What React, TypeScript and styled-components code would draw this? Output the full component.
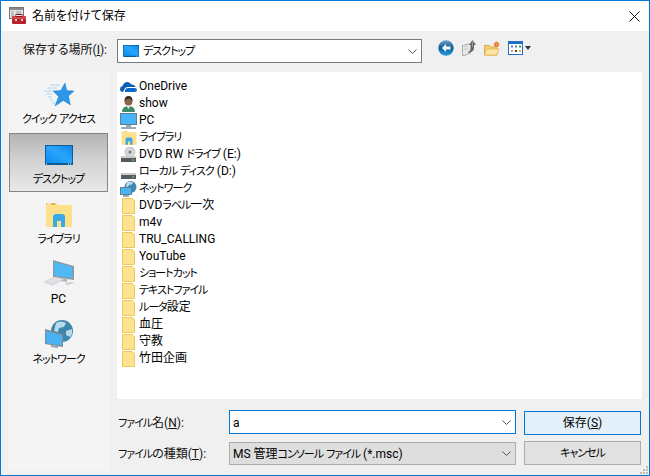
import { FC, ReactNode } from "react";
import styled, { createGlobalStyle } from "styled-components";

const GlobalStyle = createGlobalStyle`
  html, body {
    margin: 0;
    padding: 0;
    background: #f0f0f0;
  }
  * {
    box-sizing: border-box;
  }
`;

/* ---------- icons ---------- */

const AppIcon: FC = () => (
  <svg width="18" height="18" viewBox="0 0 18 18">
    <rect x="0.5" y="0.5" width="14" height="11" fill="#e4e4e4" stroke="#777" />
    <rect x="1" y="1" width="13" height="2" fill="#8a8a8a" />
    <path d="M2 5h3M2 7h3M2 9h3M7 5h5M7 7h5" stroke="#999" />
    <rect x="3" y="9" width="14" height="8" rx="1" fill="#b5232a" />
    <rect x="3" y="9" width="14" height="3" fill="#d6474a" />
    <rect x="7" y="7.5" width="6" height="2" fill="none" stroke="#8c1c20" />
    <rect x="6" y="12" width="2" height="2" fill="#f3c9c9" />
    <rect x="12" y="12" width="2" height="2" fill="#f3c9c9" />
  </svg>
);

const DesktopIcon: FC<{ w: number; h: number }> = ({ w, h }) => (
  <svg width={w} height={h} viewBox="0 0 28 20" preserveAspectRatio="none">
    <defs>
      <linearGradient id="desk" x1="0" y1="1" x2="1" y2="0">
        <stop offset="0" stopColor="#0a8cf0" />
        <stop offset="0.55" stopColor="#2aa5fb" />
        <stop offset="1" stopColor="#0f86e8" />
      </linearGradient>
    </defs>
    <rect width="28" height="20" fill="#0c5c96" />
    <rect x="1" y="1" width="26" height="17" fill="url(#desk)" />
    <path d="M1 19h1M23 19h1M25 19h1" stroke="#fff" />
  </svg>
);

const StarIcon: FC = () => (
  <svg width="30" height="24" viewBox="0 0 30 24">
    <path d="M6 2h10M3 5h10M0 8h8M2 11h6M4 14h4M6 17h3M8 20h3" stroke="#a9d6f5" strokeWidth="1" />
    <path
      d="M21 0l1.800 7.600 7.200.400-5.600 5 2 9-7-4.600-8.400 5.600 3.600-9.400-5.600-5.600 7.800-.400z"
      fill="#2b97e6"
      stroke="#1c7fca"
      strokeWidth="0.5"
    />
  </svg>
);

const LibraryIcon: FC<{ size: number }> = ({ size }) => (
  <svg width={size} height={size} viewBox="0 0 28 28">
    <path d="M1 2h9l2 2h-11z" fill="#e9b93c" />
    <rect x="1" y="4" width="26" height="22" fill="#fde08a" />
    <rect x="2" y="2.4" width="4" height="1.2" fill="#fff" />
    <path d="M8 26V16q0-3 3-3h6q3 0 3 3v10h-4v-6h-4v6z" fill="#39a8e4" />
  </svg>
);

const PcLargeIcon: FC = () => (
  <svg width="32" height="33" viewBox="0 0 32 33">
    <path d="M10 1l21 6v14l-21-3z" fill="#8b9aa6" />
    <path d="M11 3l18 5v11l-18-2.600z" fill="#4fb8f7" />
    <path d="M18 19l6 1v3l-6-1z" fill="#aeb8c0" />
    <path d="M1 23l11-5 9 2-11 6z" fill="#dfe3e6" stroke="#b5bbc0" strokeWidth="0.5" />
    <path d="M22 24l7-1 2 1-7 2z" fill="#c8cdd1" />
  </svg>
);

const NetworkLargeIcon: FC = () => (
  <svg width="30" height="30" viewBox="0 0 30 30">
    <circle cx="18" cy="11" r="11" fill="#3d86ad" />
    <path d="M12 3q5-3 10 0l-2 4-5 1-1 4-4-1zM22 11l6-2q1 5-2 8l-4-2z" fill="#b9dbe8" />
    <path d="M1 9l18 5v13l-18-3z" fill="#7d8c97" />
    <path d="M2 11l16 4.400v10.200l-16-2.600z" fill="#48b2f5" />
    <path d="M7 25l7 1.200v2l-7-1.200z" fill="#9aa7b0" />
  </svg>
);

const OneDriveIcon: FC = () => (
  <svg width="17" height="12" viewBox="0 0 17 12">
    <path
      d="M3 11q-3 0-3-3 0-2.500 2.500-3Q4 1 7.500 1 10 1 11.500 3.500 15 3.500 15.500 6H8Q5 6 4 9z"
      fill="#0a5fb4"
    />
    <path d="M5 11q-.5-4 3.500-4h6q2.500 0 2.500 2 0 2-2.500 2z" fill="#0a6cc8" />
  </svg>
);

const UserIcon: FC = () => (
  <svg width="15" height="16" viewBox="0 0 15 16">
    <path d="M1 16q0-6 6.500-6T14 16z" fill="#3f8a68" />
    <path d="M5.500 10l2 3 2-3z" fill="#d9e8de" />
    <circle cx="7.500" cy="5.500" r="4" fill="#8a6448" />
    <path d="M3.500 5q0-5 4-5t4 5q-2-2.500-4-2.500T3.500 5z" fill="#3a2a20" />
  </svg>
);

const PcSmallIcon: FC = () => (
  <svg width="17" height="16" viewBox="0 0 17 16">
    <rect x="0.500" y="0.500" width="16" height="11" fill="#48b4f8" stroke="#5f7f98" />
    <rect x="6" y="12" width="5" height="2" fill="#9ab" />
    <rect x="1" y="14" width="15" height="2" fill="#9da9b2" />
  </svg>
);

const DriveIcon: FC<{ disc?: boolean }> = ({ disc }) => (
  <svg width="17" height="16" viewBox="0 0 17 16">
    {disc && (
      <>
        <circle cx="10" cy="5" r="5" fill="#d5d8da" stroke="#9a9fa3" strokeWidth="0.5" />
        <circle cx="10" cy="5" r="1.500" fill="#777" />
      </>
    )}
    <path d="M2 9h13l1 2v4H1v-4z" fill="#555b60" />
    <path d="M2 9h13l1 2H1z" fill="#c9cdd0" />
    <rect x="12" y="12.500" width="2" height="1" fill="#6fe26f" />
  </svg>
);

const NetworkSmallIcon: FC = () => (
  <svg width="17" height="16" viewBox="0 0 17 16">
    <circle cx="10.500" cy="6" r="6" fill="#3f8ab3" />
    <path d="M7 1.500q3-1.500 6 0l-1 2-3 .5-1 2-2-.5z" fill="#bcdde9" />
    <rect x="0.500" y="6.500" width="11" height="7" fill="#48b4f8" stroke="#5f7f98" />
    <rect x="3" y="14" width="6" height="2" fill="#9da9b2" />
  </svg>
);

const FolderIcon: FC = () => (
  <svg width="13" height="16" viewBox="0 0 13 16">
    <path d="M0.500 0.500h9.500l2.500 2v13H0.500z" fill="#fde28f" stroke="#eec659" />
  </svg>
);

const Chevron: FC = () => (
  <svg width="9" height="5" viewBox="0 0 9 5">
    <path d="M.5 .5l4 4 4-4" fill="none" stroke="#555" />
  </svg>
);

const BackIcon: FC = () => (
  <svg width="16" height="16" viewBox="0 0 16 16">
    <defs>
      <linearGradient id="back" x1="0" y1="0" x2="0" y2="1">
        <stop offset="0" stopColor="#6f9ec2" />
        <stop offset="0.5" stopColor="#0d5f9f" />
        <stop offset="1" stopColor="#29a0dc" />
      </linearGradient>
    </defs>
    <circle cx="8" cy="8" r="7.700" fill="url(#back)" />
    <path d="M8 4L4 8l4 4V9.500h4.500v-3H8z" fill="#f4f8fb" />
  </svg>
);

const UpIcon: FC = () => (
  <svg width="14" height="16" viewBox="0 0 14 16">
    <path d="M.5 5.500l6-1.500h2v9l-6 2.500H.5z" fill="#e8e8e8" stroke="#ababab" />
    <path d="M2 7l4-1M2 9.500l4-1" stroke="#c8c8c8" />
    <path d="M6 12q3-1 3-5V5H7l3.500-5L14 5h-2v3q0 4-6 5z" fill="#666" />
    <path d="M10.500 1v6" stroke="#999" />
  </svg>
);

const NewFolderIcon: FC = () => (
  <svg width="16" height="15" viewBox="0 0 16 15">
    <path d="M.5 4.500h5l1 1.500H13v8H.5z" fill="#f3d27a" stroke="#d9ae4a" />
    <path d="M2.500 8H15l-2 6H.5z" fill="#fce6a4" stroke="#d9ae4a" strokeWidth="0.7" />
    <circle cx="12.500" cy="3.500" r="2.500" fill="#f4682a" />
    <path d="M12.500 0v7M9.500 3.500h6" stroke="#f8a23c" strokeWidth="0.8" />
  </svg>
);

const ViewIcon: FC = () => (
  <svg width="15" height="14" viewBox="0 0 15 14">
    <rect x="0.500" y="0.500" width="14" height="13" fill="#fff" stroke="#1b6fc9" />
    <rect x="1" y="1" width="13" height="2" fill="#1b6fc9" />
    <rect x="3" y="4.500" width="2" height="2" fill="#4f7fc4" />
    <rect x="7" y="4.500" width="2" height="2" fill="#4f7fc4" />
    <rect x="11" y="4.500" width="2" height="2" fill="#2e9a3c" />
    <rect x="3" y="9" width="2" height="2" fill="#ef8a62" />
    <rect x="7" y="9" width="2" height="2" fill="#444" />
    <rect x="11" y="9" width="2" height="2" fill="#e3b23c" />
  </svg>
);

const CloseIcon: FC = () => (
  <svg width="11" height="11" viewBox="0 0 11 11">
    <path d="M.5.500l10 10M10.500.500l-10 10" stroke="#111" strokeWidth="1" />
  </svg>
);

/* ---------- text ---------- */

const Jp: FC<{ children: string }> = ({ children }) => (
  <span>
    {children.split(/([\u30a0-\u30ff]+)/).map((part, i) =>
      i % 2 === 1 ? <Kana key={i}>{part}</Kana> : part
    )}
  </span>
);

/* ---------- data ---------- */

const sidebarItems: { label: string; icon: ReactNode; selected?: boolean }[] = [
  { label: "クイック アクセス", icon: <StarIcon /> },
  { label: "デスクトップ", icon: <DesktopIcon w={28} h={20} />, selected: true },
  { label: "ライブラリ", icon: <LibraryIcon size={28} /> },
  { label: "PC", icon: <PcLargeIcon /> },
  { label: "ネットワーク", icon: <NetworkLargeIcon /> },
];

const fileItems: { label: string; icon: ReactNode }[] = [
  { label: "OneDrive", icon: <OneDriveIcon /> },
  { label: "show", icon: <UserIcon /> },
  { label: "PC", icon: <PcSmallIcon /> },
  { label: "ライブラリ", icon: <LibraryIcon size={16} /> },
  { label: "DVD RW ドライブ (E:)", icon: <DriveIcon disc /> },
  { label: "ローカル ディスク (D:)", icon: <DriveIcon /> },
  { label: "ネットワーク", icon: <NetworkSmallIcon /> },
  { label: "DVDラベル一次", icon: <FolderIcon /> },
  { label: "m4v", icon: <FolderIcon /> },
  { label: "TRU_CALLING", icon: <FolderIcon /> },
  { label: "YouTube", icon: <FolderIcon /> },
  { label: "ショートカット", icon: <FolderIcon /> },
  { label: "テキストファイル", icon: <FolderIcon /> },
  { label: "ルータ設定", icon: <FolderIcon /> },
  { label: "血圧", icon: <FolderIcon /> },
  { label: "守教", icon: <FolderIcon /> },
  { label: "竹田企画", icon: <FolderIcon /> },
];

/* ---------- page ---------- */

const App: FC = () => (
  <>
    <GlobalStyle />
    <Window>
      <TitleBar>
        <AppIcon />
        <Title>名前を付けて保存</Title>
        <CloseButton>
          <CloseIcon />
        </CloseButton>
      </TitleBar>

      <LocationRow>
        <LocationLabel>
          保存する場所(<u>I</u>):
        </LocationLabel>
        <LocationCombo>
          <DesktopIcon w={16} h={12} />
          <ComboText>
            <Jp>デスクトップ</Jp>
          </ComboText>
          <Chevron />
        </LocationCombo>
        <ToolIcons>
          <BackIcon />
          <UpIcon />
          <NewFolderIcon />
          <ViewMenu>
            <ViewIcon />
            <ViewArrow />
          </ViewMenu>
        </ToolIcons>
      </LocationRow>

      <Body>
        <Sidebar>
          {sidebarItems.map(({ label, icon, selected }) => (
            <SidebarItem key={label} $selected={selected}>
              <SidebarIcon>{icon}</SidebarIcon>
              <Jp>{label}</Jp>
            </SidebarItem>
          ))}
        </Sidebar>

        <Main>
          <FileList>
            {fileItems.map(({ label, icon }) => (
              <FileRow key={label}>
                <FileIcon>{icon}</FileIcon>
                <Jp>{label}</Jp>
              </FileRow>
            ))}
          </FileList>

          <Form>
            <FormLabel>
              <Jp>ファイル名</Jp>(<u>N</u>):
            </FormLabel>
            <NameField>
              <FieldText>a</FieldText>
              <Chevron />
            </NameField>
            <SaveButton>
              保存(<u>S</u>)
            </SaveButton>
            <FormLabel>
              <Jp>ファイルの種類</Jp>(<u>T</u>):
            </FormLabel>
            <TypeField>
              <FieldText>
                <Jp>MS 管理コンソール ファイル (*.msc)</Jp>
              </FieldText>
              <Chevron />
            </TypeField>
            <CancelButton>
              <Jp>キャンセル</Jp>
            </CancelButton>
          </Form>
        </Main>
      </Body>

      <Grip viewBox="0 0 9 9" width="9" height="9">
        <path d="M6 0h2v2H6zM3 3h2v2H3zM6 3h2v2H6zM0 6h2v2H0zM3 6h2v2H3zM6 6h2v2H6z" fill="#bdbdbd" />
      </Grip>
    </Window>
  </>
);

const Window = styled.div`
  position: relative;
  display: flex;
  flex-direction: column;
  width: 650px;
  height: 476px;
  border: 1px solid #0078d7;
  background: #f0f0f0;
  color: #000;
  font-family: Roboto, "Noto Sans CJK JP", sans-serif;
  font-feature-settings: "palt";
  font-size: 12px;
  line-height: 17px;
`;

const Kana = styled.span`
  font-size: 11px;
  letter-spacing: -1px;
`;

const TitleBar = styled.div`
  display: flex;
  align-items: center;
  height: 30px;
  padding-left: 8px;
  background: #fff;
`;

const Title = styled.span`
  margin-left: 5px;
`;

const CloseButton = styled.div`
  display: flex;
  align-items: center;
  justify-content: center;
  width: 30px;
  height: 30px;
  margin-left: auto;
`;

const LocationRow = styled.div`
  display: flex;
  align-items: flex-start;
  height: 41px;
  padding-top: 8px;
`;

const LocationLabel = styled.span`
  width: 106px;
  line-height: 23px;
  text-align: right;
  color: #111;
`;

const LocationCombo = styled.div`
  display: flex;
  align-items: center;
  width: 305px;
  height: 24px;
  margin-left: 10px;
  padding: 0 4px 0 5px;
  border: 1px solid #7a7a7a;
  background: #fff;
`;

const ComboText = styled.span`
  flex: 1;
  margin-left: 4px;
`;

const ToolIcons = styled.div`
  display: flex;
  align-items: center;
  gap: 8px;
  margin-left: 16px;
  padding-top: 1px;
`;

const ViewMenu = styled.div`
  display: flex;
  align-items: center;
  gap: 2px;
`;

const ViewArrow = styled.div`
  width: 0;
  height: 0;
  border-left: 3.5px solid transparent;
  border-right: 3.5px solid transparent;
  border-top: 4px solid #333;
`;

const Body = styled.div`
  display: flex;
  flex: 1;
  min-height: 0;
  padding-left: 7px;
`;

const Sidebar = styled.div`
  display: flex;
  flex-direction: column;
  width: 102px;
  height: 399px;
  padding: 1px 2px 0 1px;
  background: #f4f4f4;
`;

const SidebarItem = styled.div<{ $selected?: boolean }>`
  display: flex;
  flex-direction: column;
  align-items: center;
  flex-shrink: 0;
  height: ${(p) => (p.$selected ? "59px" : "60px")};
  margin-bottom: ${(p) => (p.$selected ? "1px" : "0")};
  padding-top: 5px;
  border: ${(p) => (p.$selected ? "1px solid #858585" : "1px solid transparent")};
  background: ${(p) =>
    p.$selected ? "linear-gradient(#b4b4b4, #d2d2d2 45%, #e8e8e8)" : "transparent"};
  white-space: nowrap;
`;

const SidebarIcon = styled.div`
  display: flex;
  align-items: center;
  justify-content: center;
  flex-shrink: 0;
  height: 32px;
`;

const Main = styled.div`
  display: flex;
  flex-direction: column;
  flex: 1;
  min-width: 0;
  padding-left: 7px;
`;

const FileList = styled.div`
  width: 525px;
  height: 327px;
  padding: 6px 0 0 3px;
  background: #fff;
`;

const FileRow = styled.div`
  display: flex;
  align-items: center;
  height: 17px;
  white-space: nowrap;
`;

const FileIcon = styled.div`
  display: flex;
  align-items: center;
  justify-content: center;
  width: 17px;
  height: 17px;
  margin-right: 2px;
`;

const Form = styled.div`
  display: grid;
  grid-template-columns: 112px 287px 125px;
  grid-template-rows: 24px 24px;
  row-gap: 7px;
  align-items: center;
  padding-top: 11px;
`;

const FormLabel = styled.span`
  padding: 2px 0 0 1px;
  color: #111;
`;

const Field = styled.div`
  display: flex;
  align-items: center;
  justify-content: space-between;
  padding: 0 4px 0 3px;
`;

const FieldText = styled.span`
  padding-top: 2px;
`;

const NameField = styled(Field)`
  height: 24px;
  border: 1px solid #0078d7;
  background: #fff;
`;

const TypeField = styled(Field)`
  align-self: end;
  height: 23px;
  border: 1px solid #acacac;
  background: #dedede;
`;

const DialogButton = styled.div`
  display: flex;
  align-items: center;
  justify-content: center;
  height: 24px;
  margin-left: 8px;
  padding-top: 1px;
`;

const SaveButton = styled(DialogButton)`
  align-self: start;
  margin-top: 1px;
  border: 1px solid #0078d7;
  background: #e3f0fa;
`;

const CancelButton = styled(DialogButton)`
  border: 1px solid #adadad;
  background: #e1e1e1;
`;

const Grip = styled.svg`
  position: absolute;
  right: 0;
  bottom: 0;
`;

export default App;
